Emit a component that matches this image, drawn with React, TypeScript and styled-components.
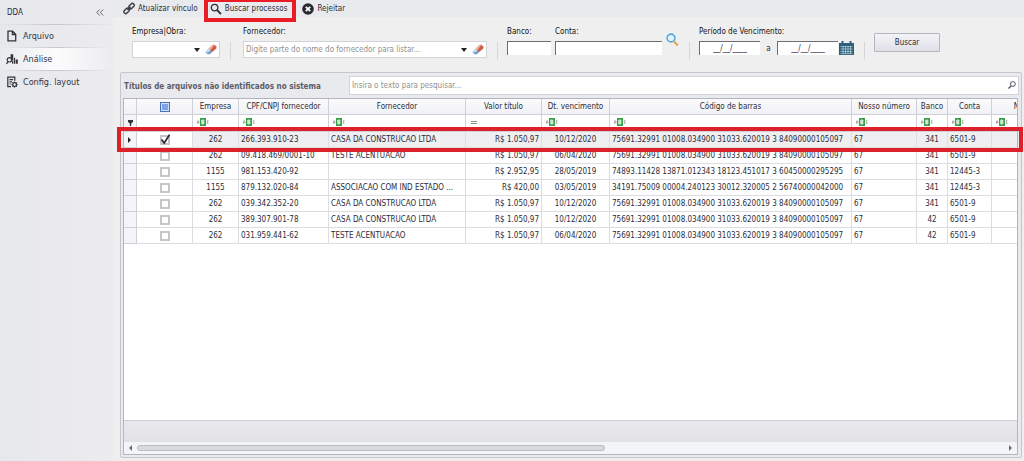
import React from 'react';
import styled, { createGlobalStyle } from 'styled-components';

const Global = createGlobalStyle`
  * { box-sizing: border-box; }
  body { margin: 0; background: #efeff0; }
  body, input, select, button, table {
    font-family: 'DejaVu Sans Condensed', 'DejaVu Sans', sans-serif;
    font-size: 8px;
    color: #2c2c38;
  }
`;

const Page = styled.div`
  display: flex;
  min-height: 100vh;
`;

const Sidebar = styled.nav`
  flex: 0 0 113px;
  background: linear-gradient(90deg, #e7e8ec, #ececef);
`;

const SideHeader = styled.div`
  display: flex;
  align-items: center;
  justify-content: space-between;
  height: 24px;
  padding: 0 9px 0 7px;
`;

const Collapse = styled.button`
  display: flex;
  padding: 0;
  border: 0;
  background: none;
`;

const SideItem = styled.a<{ $active?: boolean }>`
  display: flex;
  align-items: center;
  gap: 5px;
  height: 23px;
  padding-left: 6px;
  color: #34343e;
  text-decoration: none;
  background: ${p => (p.$active ? 'linear-gradient(90deg, #e9eaee, #fcfcfd 50%, #ececef)' : 'none')};
  border: solid transparent;
  border-width: 1px 0 0;
  border-image: linear-gradient(90deg, transparent, #c6c7cd 50%, transparent) 1;
  font-size: 9px;
`;

const Main = styled.main`
  flex: 1;
  min-width: 0;
  display: flex;
  flex-direction: column;
`;

const Toolbar = styled.div`
  display: flex;
  align-items: flex-start;
  height: 17px;
  padding-left: 10px;
  background: #e9eaee;
`;

const ToolButton = styled.button`
  display: flex;
  align-items: center;
  gap: 3px;
  height: 17px;
  padding: 0;
  border: 0;
  background: none;
  white-space: nowrap;
`;

const Marked = styled.div`
  position: relative;
  margin: 0 15px 0 12px;
  &::after {
    content: '';
    position: absolute;
    inset: -2px -9px -5px -6px;
    border: 4px solid #ea1c25;
    pointer-events: none;
  }
`;

const Filters = styled.form`
  display: flex;
  align-items: flex-start;
  height: 55px;
  padding: 8px 0 0 19px;
`;

const Field = styled.div<{ $w: number; $gap?: number }>`
  display: flex;
  flex-direction: column;
  flex: 0 0 ${p => p.$w}px;
  min-width: 0;
  margin-right: ${p => p.$gap ?? 0}px;
`;

const Label = styled.label`
  height: 16px;
  line-height: 13px;
  white-space: nowrap;
  color: #111;
`;

const Combo = styled.div`
  display: flex;
  align-items: center;
  height: 17px;
  padding-right: 2px;
  background: #fff;
  border: 1px solid #d3d4da;
`;

const ComboInput = styled.input`
  flex: 1;
  min-width: 0;
  height: 15px;
  padding: 0 2px;
  border: 0;
  background: none;
  &::placeholder { color: #909090; opacity: 1; }
`;

const IconButton = styled.button`
  display: flex;
  padding: 0;
  border: 0;
  background: none;
`;

const ClearButton = styled(IconButton)`
  margin-left: 5px;
`;

const LookupButton = styled(IconButton)`
  margin-top: 8px;
`;

const Sunken = styled.input<{ $center?: boolean }>`
  width: 100%;
  min-width: 0;
  height: 14px;
  padding: 0 2px;
  background: #fff;
  border: solid #6d6d72;
  border-width: 1px 0 0 1px;
  border-radius: 0;
  text-align: ${p => (p.$center ? 'center' : 'left')};
`;

const Divider = styled.div<{ $gap: number }>`
  flex: none;
  width: 1px;
  height: 18px;
  margin: 17px ${p => p.$gap}px 0 10px;
  background: #d6d6da;
`;

const DateRow = styled.div`
  display: grid;
  grid-template-columns: 61px 17px 61px 16px;
  align-items: center;
  text-align: center;
`;

const Submit = styled.button`
  width: 66px;
  height: 19px;
  margin-top: 8px;
  padding: 0;
  border: 1px solid #b4b6c0;
  border-radius: 1px;
  background: linear-gradient(#f4f4f7, #dfe0e8);
`;

const Panel = styled.section`
  position: relative;
  flex: 1;
  display: flex;
  flex-direction: column;
  margin: 0 2px 3px 7px;
  padding: 2px;
  border: 1px solid #c6c7cd;
  border-radius: 2px;
  background: #e9eaee;
`;

const PanelHead = styled.header`
  display: flex;
  align-items: center;
  height: 23px;
  padding-bottom: 3px;
`;

const Title = styled.h2`
  flex: 0 0 226px;
  margin: 0;
  padding: 2px 0 0 1px;
  font-size: 8px;
  white-space: nowrap;
  color: #5c5c68;
`;

const Search = styled.label`
  flex: 1;
  display: flex;
  align-items: center;
  height: 19px;
  padding-right: 2px;
  background: #fff;
  border: 1px solid #d3d4da;
`;

const Grid = styled.div`
  flex: 1;
  display: flex;
  flex-direction: column;
  min-width: 0;
  margin-right: 1px;
  border: 1px solid #b2b4bf;
  background: #fff;
`;

const Viewport = styled.div`
  flex: 1;
  overflow: hidden;
`;

const Table = styled.table`
  width: 918px;
  table-layout: fixed;
  border-collapse: separate;
  border-spacing: 0;
`;

const Th = styled.th`
  height: 16px;
  padding: 0;
  font-weight: normal;
  white-space: nowrap;
  border: solid #d0d1d8;
  border-width: 0 1px 1px 0;
  background: linear-gradient(#fafafc, #f1f2f6);
`;

const FilterCell = styled.td`
  height: 17px;
  padding: 0 0 0 4px;
  border: solid #d0d1d8;
  border-width: 0 1px 1px 0;
`;

const Row = styled.tr<{ $selected?: boolean }>`
  background: ${p => (p.$selected ? '#efeff1' : '#fff')};
`;

const Td = styled.td<{ $align?: string; $white?: boolean }>`
  height: 16px;
  padding: 0 2px;
  line-height: 13px;
  overflow: hidden;
  white-space: nowrap;
  text-align: ${p => p.$align ?? 'left'};
  border: solid #dcdde1;
  border-width: 0 1px 1px 0;
  ${p => p.$white && 'background: #fff;'}
`;

const Indicator = styled.td`
  height: 16px;
  padding: 0 0 0 4px;
  border: solid #d0d1d8;
  border-width: 0 1px 1px 0;
  background: #f4f5f9;
  svg { display: block; }
`;

const Check = styled.input`
  appearance: none;
  display: block;
  width: 10px;
  height: 10px;
  margin: 0 auto;
  border: 2px solid #c5c6ca;
  background: #fff;
  &:indeterminate {
    border: 1px solid #4a70b8;
    background: #7ea4e6;
    box-shadow: inset 0 0 0 1px #cfe0fa;
  }
`;

const CheckWrap = styled.div`
  position: relative;
  width: 10px;
  margin: 0 auto;
  svg { position: absolute; left: 0; top: -1px; pointer-events: none; }
`;

const Footer = styled.div`
  height: 22px;
  border-top: 1px solid #cfd0d4;
  background: linear-gradient(#e9e9ed, #e1e1e6);
`;

const Scroll = styled.div`
  display: flex;
  align-items: center;
  justify-content: space-between;
  height: 12px;
  padding: 0 5px;
  background: #f3f4f8;
`;

const Track = styled.div`
  flex: 1;
  margin: 0 5px;
`;

const Thumb = styled.div`
  width: 54%;
  height: 6px;
  border: 1px solid #bcbdc1;
  border-radius: 3px;
  background: #d9dadd;
`;

const RowMark = styled.div`
  position: absolute;
  left: -4px;
  right: -2px;
  top: 54px;
  height: 25px;
  border: 4px solid #dd202a;
  pointer-events: none;
`;

const Eraser = () => (
  <svg width="12" height="11" viewBox="0 0 12 11">
    <path d="M1 7.4 3.6 4.8 7 8.2 4.8 10.2H2.6L.6 8.6z" fill="#6f9dce" />
    <path d="M3.6 4.8 7.6.8h1.8l2.2 2-.2 1.6L7 8.2z" fill="#cf5f4c" />
    <path d="M3.6 4.8 7.6.8h1.8L5.2 6.2z" fill="#f2b6a4" />
    <path d="M1 7.4 3.6 4.8 5.2 6.4 2.4 9z" fill="#c3dcf2" />
  </svg>
);

const Caret = () => (
  <svg width="6" height="4" viewBox="0 0 6 4"><path d="M0 0h6L3 4z" fill="#222" /></svg>
);

const Arrow = ({ left = false, color = '#6c6d74' }: { left?: boolean; color?: string }) => (
  <svg width="3" height="6" viewBox="0 0 3 6">
    <path d={left ? 'M3 0v6L0 3z' : 'M0 0v6L3 3z'} fill={color} />
  </svg>
);

const Abc = () => (
  <svg width="12" height="8" viewBox="0 0 12 8">
    <path d="M.5 5.500V3.300l.7-.8.7.8v2.200M.5 4.300h1.400" fill="none" stroke="#858589" strokeWidth=".7" />
    <rect x="3" width="6" height="8" fill="#36a04b" />
    <path d="M4.800 2h1.700l.6.8-.5 1.100.5 1.100-.6 1H4.800zM5 4h1.500" fill="#8fd09a" stroke="#fff" strokeWidth=".8" />
    <path d="M11.600 2.700h-1.200v2.600h1.200" fill="none" stroke="#858589" strokeWidth=".7" />
  </svg>
);

const Equal = () => (
  <svg width="8" height="8" viewBox="0 0 8 8"><path d="M1 3.500h6M1 5.500h6" stroke="#8c8c90" /></svg>
);

const cols = [13, 56, 46, 90, 137, 76, 68, 242, 65, 31, 44, 50];
const heads = ['Empresa', 'CPF/CNPJ fornecedor', 'Fornecedor', 'Valor título', 'Dt. vencimento', 'Código de barras', 'Nosso número', 'Banco', 'Conta', 'N'];
const aligns = ['center', 'left', 'left', 'right', 'center', 'left', 'left', 'center', 'left', 'left'];
const A = '75691.32991 01008.034900 31033.620019 3 84090000105097';
const rows = [
  ['262', '266.393.910-23', 'CASA DA CONSTRUCAO LTDA', 'R$ 1.050,97', '10/12/2020', A, '67', '341', '6501-9'],
  ['262', '09.418.469/0001-10', 'TESTE ACENTUACAO', 'R$ 1.050,97', '06/04/2020', A, '67', '341', '6501-9'],
  ['1155', '981.153.420-92', '', 'R$ 2.952,95', '28/05/2019', '74893.11428 13871.012343 18123.451017 3 60450000295295', '67', '341', '12445-3'],
  ['1155', '879.132.020-84', 'ASSOCIACAO COM IND ESTADO ...', 'R$ 420,00', '03/05/2019', '34191.75009 00004.240123 30012.320005 2 56740000042000', '67', '341', '12445-3'],
  ['262', '039.342.352-20', 'CASA DA CONSTRUCAO LTDA', 'R$ 1.050,97', '10/12/2020', A, '67', '341', '6501-9'],
  ['262', '389.307.901-78', 'CASA DA CONSTRUCAO LTDA', 'R$ 1.050,97', '10/12/2020', A, '67', '42', '6501-9'],
  ['262', '031.959.441-62', 'TESTE ACENTUACAO', 'R$ 1.050,97', '06/04/2020', A, '67', '42', '6501-9'],
];

export default function App() {
  return (
    <>
      <Global />
      <Page>
        <Sidebar>
          <SideHeader>
            <span>DDA</span>
            <Collapse aria-label="Recolher menu">
              <svg width="8" height="7" viewBox="0 0 8 7" fill="none" stroke="#55555f" strokeWidth=".9">
                <path d="M3.600.5.800 3.500l2.800 3M7.200.5 4.400 3.500l2.800 3" />
              </svg>
            </Collapse>
          </SideHeader>
          <SideItem href="#arquivo">
            <svg width="12" height="12" viewBox="0 0 12 12" fill="none" stroke="#33333b" strokeWidth="1.300">
              <path d="M2 1.200h4.600L9.700 4.300v6.500H2zM6.400 1.200v3.300h3.300" />
            </svg>
            Arquivo
          </SideItem>
          <SideItem href="#analise" $active>
            <svg width="12" height="12" viewBox="0 0 12 12">
              <circle cx="3.400" cy="6.800" r="2.200" fill="none" stroke="#33333b" strokeWidth="1.200" />
              <path d="M2 8.600.5 10.800" stroke="#33333b" strokeWidth="1.300" />
              <path d="M4.600 1.200h2.600v9.600H6V8.700l.5-1.500L4.600 4zM7.900 4.800h1.200v6H7.900zM9.700 6.500h2.100v4.300H9.700z" fill="#33333b" />
            </svg>
            Análise
          </SideItem>
          <SideItem href="#layout">
            <svg width="12" height="12" viewBox="0 0 12 12" fill="none" stroke="#33333b" strokeWidth="1.200">
              <path d="M5 10.600H1.800V1.200h7v3.600M3.500 3.600h3.600M3.500 5.800h2.400M3.500 8h1.200" />
              <circle cx="8.600" cy="8.600" r="1.900" />
              <path d="M8.600 5.500v1.200M8.600 10.500v1.200M5.500 8.600h1.200M10.500 8.600h1.200M6.400 6.400l.9.9M9.900 9.900l.9.9M6.400 10.800l.9-.9M9.900 7.300l.9-.9" strokeWidth="1" />
            </svg>
            Config. layout
          </SideItem>
        </Sidebar>
        <Main>
          <Toolbar>
            <ToolButton>
              <svg width="12" height="13" viewBox="0 0 13 13" fill="none" stroke="#3a3a42" strokeWidth="1.500">
                <rect x="5.900" y="2" width="6.600" height="3.900" rx="1.900" transform="rotate(-45 9.200 3.950)" />
                <rect x=".6" y="7.100" width="6.600" height="3.900" rx="1.900" transform="rotate(-45 3.900 9.050)" />
                <path d="M4.800 8.200 8.300 4.700" />
              </svg>
              Atualizar vínculo
            </ToolButton>
            <Marked>
              <ToolButton>
                <svg width="12" height="12" viewBox="0 0 12 12" fill="none" stroke="#33333b">
                  <circle cx="4.600" cy="4.600" r="3.300" strokeWidth="1.300" />
                  <path d="M7.100 7.100 11 11" strokeWidth="2" />
                </svg>
                Buscar processos
              </ToolButton>
            </Marked>
            <ToolButton>
              <svg width="12" height="12" viewBox="0 0 12 12">
                <circle cx="6" cy="6" r="5.800" fill="#2a2a30" />
                <path d="m3.800 3.800 4.400 4.400m0-4.400L3.800 8.200" stroke="#fff" strokeWidth="1.800" />
              </svg>
              Rejeitar
            </ToolButton>
          </Toolbar>
          <Filters onSubmit={e => e.preventDefault()}>
            <Field $w={88}>
              <Label htmlFor="empresa">Empresa|Obra:</Label>
              <Combo>
                <ComboInput id="empresa" />
                <Caret />
                <ClearButton type="button" aria-label="Limpar empresa"><Eraser /></ClearButton>
              </Combo>
            </Field>
            <Divider $gap={12} />
            <Field $w={244}>
              <Label htmlFor="fornecedor">Fornecedor:</Label>
              <Combo>
                <ComboInput id="fornecedor" placeholder="Digite parte do nome do fornecedor para listar..." />
                <Caret />
                <ClearButton type="button" aria-label="Limpar fornecedor"><Eraser /></ClearButton>
              </Combo>
            </Field>
            <Divider $gap={9} />
            <Field $w={44} $gap={4}>
              <Label htmlFor="banco">Banco:</Label>
              <Sunken id="banco" />
            </Field>
            <Field $w={107} $gap={4}>
              <Label htmlFor="conta">Conta:</Label>
              <Sunken id="conta" />
            </Field>
            <LookupButton type="button" aria-label="Procurar conta">
              <svg width="13" height="14" viewBox="0 0 13 14" fill="none">
                <path d="m8 8.400 3.800 4" stroke="#e3a64b" strokeWidth="2.200" />
                <circle cx="5" cy="5" r="3.900" fill="#e4f3fb" stroke="#55a9d8" strokeWidth="1.600" />
              </svg>
            </LookupButton>
            <Divider $gap={9} />
            <Field $w={155}>
              <Label htmlFor="inicio">Período de Vencimento:</Label>
              <DateRow>
                <Sunken id="inicio" $center defaultValue="__/__/____" />
                <span>a</span>
                <Sunken aria-label="Fim do período" $center defaultValue="__/__/____" />
                <IconButton type="button" aria-label="Abrir calendário">
                  <svg width="16" height="14" viewBox="0 0 16 14">
                    <path d="M1 2h15v12H1zM3.500 0h2v3h-2zM11.500 0h2v3h-2z" fill="#2f6079" />
                    <path d="M2.500 5.500h12M2.500 8h12M2.500 10.500h12M2.500 12.700h12M5 5v8M7.500 5v8M10 5v8M12.500 5v8" stroke="#b9d2dd" strokeWidth=".7" />
                  </svg>
                </IconButton>
              </DateRow>
            </Field>
            <Divider $gap={9} />
            <Submit type="submit">Buscar</Submit>
          </Filters>
          <Panel>
            <PanelHead>
              <Title>Títulos de arquivos não identificados no sistema</Title>
              <Search>
                <ComboInput aria-label="Pesquisar" placeholder="Insira o texto para pesquisar..." />
                <svg width="8" height="8" viewBox="0 0 8 8" fill="none" stroke="#44444c">
                  <circle cx="4.900" cy="3" r="2.400" strokeWidth=".9" />
                  <path d="M3.200 4.800.5 7.500" strokeWidth="1.200" />
                </svg>
              </Search>
            </PanelHead>
            <Grid>
              <Viewport>
                <Table>
                  <colgroup>{cols.map((w, i) => <col key={i} width={w} />)}</colgroup>
                  <thead>
                    <tr>
                      <Th />
                      <Th>
                        <Check type="checkbox" aria-label="Selecionar todos" ref={el => { if (el) el.indeterminate = true; }} />
                      </Th>
                      {heads.map(h => <Th key={h}>{h}</Th>)}
                    </tr>
                  </thead>
                  <tbody>
                    <tr>
                      <Indicator>
                        <svg width="5" height="6" viewBox="0 0 5 6"><path d="M0 0h5v2L3.200 3.400V6H1.800V3.400L0 2z" fill="#33333b" /></svg>
                      </Indicator>
                      <FilterCell />
                      {heads.map((h, i) => <FilterCell key={h}>{i === 3 ? <Equal /> : <Abc />}</FilterCell>)}
                    </tr>
                    {rows.map((r, n) => (
                      <Row key={n} $selected={n === 0}>
                        <Indicator>{n === 0 && <Arrow color="#222" />}</Indicator>
                        <Td $white>
                          <CheckWrap>
                            <Check type="checkbox" aria-label={`Selecionar ${r[1]}`} defaultChecked={n === 0} />
                            {n === 0 && (
                              <svg width="11" height="11" viewBox="0 0 11 11" fill="none" stroke="#2a2a30" strokeWidth="1.700">
                                <path d="m1.500 5.500 2.700 3.500L9.500.8" />
                              </svg>
                            )}
                          </CheckWrap>
                        </Td>
                        {aligns.map((a, i) => <Td key={i} $align={a}>{r[i]}</Td>)}
                      </Row>
                    ))}
                  </tbody>
                </Table>
              </Viewport>
              <Footer />
              <Scroll>
                <Arrow left />
                <Track><Thumb /></Track>
                <Arrow />
              </Scroll>
            </Grid>
            <RowMark />
          </Panel>
        </Main>
      </Page>
    </>
  );
}
